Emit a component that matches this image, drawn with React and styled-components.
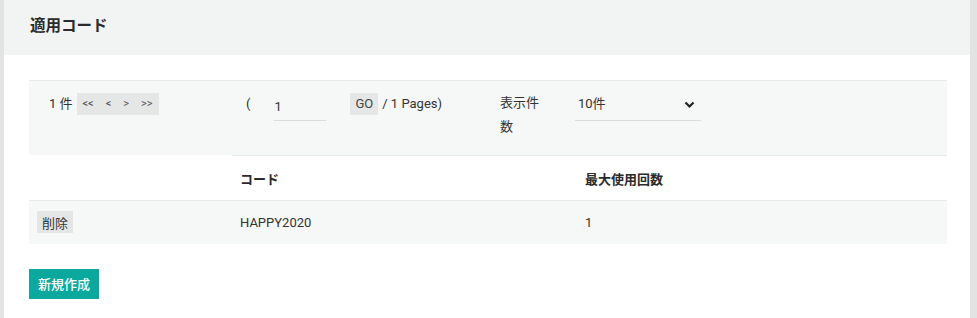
import React from "react";
import styled, { createGlobalStyle } from "styled-components";

const GlobalStyle = createGlobalStyle`
  * {
    box-sizing: border-box;
  }
  body {
    margin: 0;
    background: #e2e3e3;
    font-family: Roboto, "Noto Sans CJK JP", sans-serif;
    font-size: 13px;
    color: #333;
  }
`;

const Card = styled.div`
  margin-left: 4px;
  width: 966px;
  min-height: 318px;
  background: #fff;
`;

const Header = styled.div`
  height: 55px;
  background: #f2f3f3;
  display: flex;
  align-items: center;
  padding: 0 0 7px 26px;
`;

const Title = styled.h2`
  margin: 0;
  font-size: 15.5px;
  font-weight: 700;
  color: #2b2b2b;
`;

const Body = styled.div`
  padding: 25px 23px 20px 25px;
`;

const Filter = styled.div`
  display: flex;
  align-items: flex-start;
  height: 75px;
  padding-top: 12px;
  background: #f6f7f7;
  border-top: 1px solid #e8e9e9;
`;

const Cell = styled.div`
  display: flex;
  align-items: flex-start;
  width: ${(p) => p.$w}px;
  padding-left: ${(p) => p.$pl || 0}px;
  line-height: 22px;
  flex-shrink: 0;
  white-space: nowrap;
`;

const Count = styled.span`
  margin-right: 4px;
`;

const Pager = styled.div`
  display: flex;
  background: #e5e6e6;
  height: 22px;
`;

const PageBtn = styled.span`
  padding: 0 6px;
  font-size: 11px;
  line-height: 22px;
  color: #555;
`;

const Paren = styled.span`
  margin-right: 24px;
`;

const PageInput = styled.input`
  width: 52px;
  height: 28px;
  padding: 0;
  border: none;
  border-bottom: 1px solid #dcdcdc;
  background: transparent;
  font: inherit;
  color: #333;
  outline: none;
  margin-right: 24px;
`;

const GoBtn = styled.span`
  background: #e5e6e6;
  padding: 0 5px;
  height: 22px;
  line-height: 22px;
  color: #444;
  margin-right: 4px;
`;

const Label = styled.div`
  width: 45px;
  line-height: 24px;
  margin-top: -2px;
  margin-right: 30px;
  flex-shrink: 0;
`;

const Select = styled.div`
  width: 126px;
  height: 28px;
  padding-left: 3px;
  border-bottom: 1px solid #dcdcdc;
  display: flex;
  align-items: flex-start;
  justify-content: space-between;
  line-height: 22px;
  svg {
    margin-top: 8px;
    margin-right: 6px;
  }
`;

const Table = styled.table`
  border-collapse: collapse;
  width: 918px;
  table-layout: fixed;
`;

const Th = styled.th`
  height: 45px;
  padding: 0 8px;
  text-align: left;
  font-weight: 700;
  color: #2b2b2b;
  border-top: ${(p) => (p.$blank ? "none" : "1px solid #e8e9e9")};
  border-bottom: 1px solid #e8e9e9;
`;

const Row = styled.tr`
  background: #f6f7f7;
`;

const Td = styled.td`
  height: 43px;
  padding: 0 8px;
  color: #333;
`;

const DeleteBtn = styled.button`
  border: none;
  background: #e4e5e5;
  padding: 0 5px;
  height: 22px;
  font: inherit;
  color: #333;
`;

const NewBtn = styled.button`
  margin-top: 25px;
  border: none;
  background: #0ba89e;
  color: #fff;
  height: 30px;
  width: 70px;
  font: inherit;
  font-weight: 500;
`;

const Chevron = () => (
  <svg width="11" height="8" viewBox="0 0 11 8">
    <path d="M1.5 1.5 L5.5 5.5 L9.5 1.5" fill="none" stroke="#222" strokeWidth="2.2" />
  </svg>
);

export default function App() {
  return (
    <>
      <GlobalStyle />
      <Card>
        <Header>
          <Title>適用コード</Title>
        </Header>
        <Body>
          <Filter>
            <Cell $w={217} $pl={20}>
              <Count>1 件</Count>
              <Pager>
                <PageBtn>&lt;&lt;</PageBtn>
                <PageBtn>&lt;</PageBtn>
                <PageBtn>&gt;</PageBtn>
                <PageBtn>&gt;&gt;</PageBtn>
              </Pager>
            </Cell>
            <Cell $w={254}>
              <Paren>(</Paren>
              <PageInput defaultValue="1" />
              <GoBtn>GO</GoBtn>
              <span>/ 1 Pages)</span>
            </Cell>
            <Label>表示件数</Label>
            <Select>
              <span>10件</span>
              <Chevron />
            </Select>
          </Filter>
          <Table>
            <colgroup>
              <col style={{ width: 203 }} />
              <col style={{ width: 345 }} />
              <col style={{ width: 370 }} />
            </colgroup>
            <thead>
              <tr>
                <Th $blank />
                <Th>コード</Th>
                <Th>最大使用回数</Th>
              </tr>
            </thead>
            <tbody>
              <Row>
                <Td>
                  <DeleteBtn>削除</DeleteBtn>
                </Td>
                <Td>HAPPY2020</Td>
                <Td>1</Td>
              </Row>
            </tbody>
          </Table>
          <NewBtn>新規作成</NewBtn>
        </Body>
      </Card>
    </>
  );
}
